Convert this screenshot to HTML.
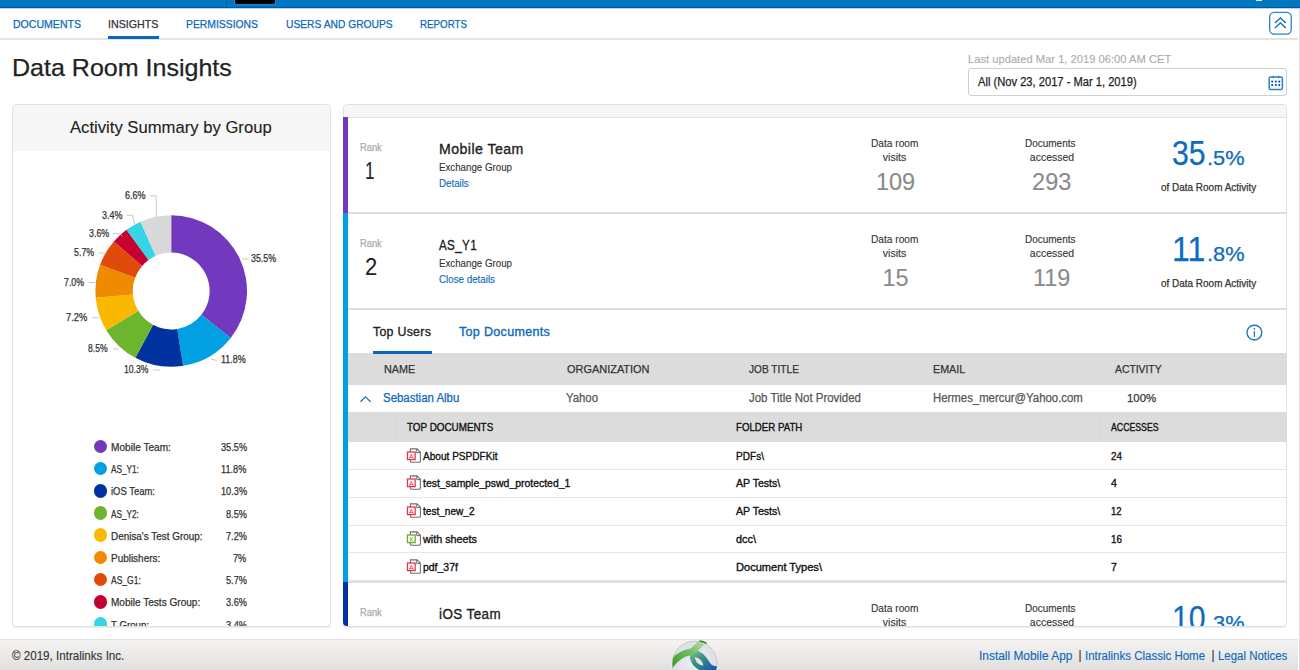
<!DOCTYPE html><html><head><meta charset="utf-8"><style>
*{margin:0;padding:0;box-sizing:border-box}
html,body{width:1300px;height:670px;overflow:hidden;background:#fff;font-family:"Liberation Sans",sans-serif}
.t{position:absolute;white-space:nowrap;line-height:1;transform-origin:0 0}
.b{position:absolute}
</style></head><body>
<div class="b" style="left:0;top:0;width:1300px;height:9px;background:linear-gradient(#0077c0 0,#0077c0 7px,#0057b0 7px,#0057b0 8px,#b8d4ee 8px)"></div>
<div class="b" style="left:226px;top:0;width:1px;height:8px;background:#035a94"></div>
<div class="b" style="left:235px;top:-4px;width:40px;height:8px;background:#000;border-radius:2px;box-shadow:0 0 0 1px #1a86d0"></div>
<div class="b" style="left:1256px;top:0;width:6px;height:1px;background:#e8eef4"></div>
<div class="b" style="left:0;top:38px;width:1298px;height:2px;background:#e4e4e4"></div>
<div class="t" style="left:13.00px;top:18.97px;font-size:11.5px;color:#0b68bb;font-weight:400;-webkit-text-stroke:0.25px #0b68bb;transform:scaleX(0.9175);">DOCUMENTS</div>
<div class="t" style="left:108.40px;top:18.97px;font-size:11.5px;color:#333;font-weight:400;-webkit-text-stroke:0.25px #333;transform:scaleX(0.9294);">INSIGHTS</div>
<div class="t" style="left:186.20px;top:18.97px;font-size:11.5px;color:#0b68bb;font-weight:400;-webkit-text-stroke:0.25px #0b68bb;transform:scaleX(0.9015);">PERMISSIONS</div>
<div class="t" style="left:285.60px;top:18.97px;font-size:11.5px;color:#0b68bb;font-weight:400;-webkit-text-stroke:0.25px #0b68bb;transform:scaleX(0.8922);">USERS AND GROUPS</div>
<div class="t" style="left:419.90px;top:18.97px;font-size:11.5px;color:#0b68bb;font-weight:400;-webkit-text-stroke:0.25px #0b68bb;transform:scaleX(0.8488);">REPORTS</div>
<div class="b" style="left:108px;top:36px;width:51px;height:3px;background:#0a66b8"></div>
<svg class="b" style="left:1268px;top:11px" width="25" height="25" viewBox="0 0 25 25"><rect x="1.65" y="1.35" width="21.6" height="21.7" rx="4.5" fill="none" stroke="#2a82cc" stroke-width="1.3"/><path d="M7 12 L12.4 6.8 L17.8 12 M7 17 L12.4 11.8 L17.8 17" fill="none" stroke="#0a64b4" stroke-width="1.3"/></svg>
<div class="b" style="left:1299px;top:9px;width:1px;height:661px;background:#dcdcdc"></div>
<div class="t" style="left:12.20px;top:56.38px;font-size:24px;color:#222;font-weight:400;-webkit-text-stroke:0.25px #222;transform:scaleX(1.0431);">Data Room Insights</div>
<div class="t" style="left:968.30px;top:53.57px;font-size:11.5px;color:#ababab;font-weight:400;-webkit-text-stroke:0.12px #ababab;transform:scaleX(0.9724);">Last updated Mar 1, 2019 06:00 AM CET</div>
<div class="b" style="left:968px;top:68px;width:319px;height:28px;border:1px solid #d0d0d0;border-radius:3px;background:#fff"></div>
<div class="t" style="left:978.30px;top:76.12px;font-size:12.5px;color:#222;font-weight:400;-webkit-text-stroke:0.25px #222;transform:scaleX(0.8922);">All (Nov 23, 2017 - Mar 1, 2019)</div>
<svg class="b" style="left:1267px;top:74px" width="18" height="18" viewBox="0 0 18 18"><rect x="2.2" y="2.9" width="13.2" height="12.6" rx="1.6" fill="none" stroke="#2a82cc" stroke-width="1.5"/><rect x="5.6" y="1.8" width="1.4" height="2.4" fill="#2a82cc"/><rect x="10.8" y="1.8" width="1.4" height="2.4" fill="#2a82cc"/><circle cx="5.2" cy="7.6" r="1.1" fill="#0a4fa8"/><circle cx="8.8" cy="7.6" r="1.1" fill="#0a4fa8"/><circle cx="12.3" cy="7.6" r="1.1" fill="#0a4fa8"/><circle cx="5.2" cy="11.1" r="1.1" fill="#0a4fa8"/><circle cx="8.8" cy="11.1" r="1.1" fill="#0a4fa8"/><circle cx="12.3" cy="11.1" r="1.1" fill="#0a4fa8"/></svg>
<div class="b" style="left:12px;top:104px;width:319px;height:523px;border:1px solid #e2e2e2;border-radius:4px;background:#fff;overflow:hidden;box-shadow:0 1px 0 #ececec"><div class="b" style="left:0;top:0;width:317px;height:46px;background:#f6f6f6"></div></div>
<div class="t" style="left:70.00px;top:118.71px;font-size:17px;color:#222;font-weight:400;-webkit-text-stroke:0.12px #222;transform:scaleX(0.9793);">Activity Summary by Group</div>
<svg class="b" style="left:0;top:0" width="340" height="400" viewBox="0 0 340 400"><path d="M171.20 215.20 A75.8 75.8 0 0 1 230.68 337.99 L201.33 314.81 A38.4 38.4 0 0 0 171.20 252.60Z" fill="#7239bf"/><path d="M230.68 337.99 A75.8 75.8 0 0 1 183.10 365.86 L177.23 328.92 A38.4 38.4 0 0 0 201.33 314.81Z" fill="#00a0e3"/><path d="M183.10 365.86 A75.8 75.8 0 0 1 135.39 357.81 L153.06 324.84 A38.4 38.4 0 0 0 177.23 328.92Z" fill="#0033a0"/><path d="M135.39 357.81 A75.8 75.8 0 0 1 106.28 330.14 L138.31 310.83 A38.4 38.4 0 0 0 153.06 324.84Z" fill="#6cb52d"/><path d="M106.28 330.14 A75.8 75.8 0 0 1 95.70 297.69 L132.95 294.39 A38.4 38.4 0 0 0 138.31 310.83Z" fill="#f8b900"/><path d="M95.70 297.69 A75.8 75.8 0 0 1 100.08 264.78 L135.17 277.71 A38.4 38.4 0 0 0 132.95 294.39Z" fill="#f08a00"/><path d="M100.08 264.78 A75.8 75.8 0 0 1 113.86 241.43 L142.15 265.89 A38.4 38.4 0 0 0 135.17 277.71Z" fill="#e04a0a"/><path d="M113.86 241.43 A75.8 75.8 0 0 1 126.49 229.79 L148.55 259.99 A38.4 38.4 0 0 0 142.15 265.89Z" fill="#c70032"/><path d="M126.49 229.79 A75.8 75.8 0 0 1 140.54 221.68 L155.67 255.88 A38.4 38.4 0 0 0 148.55 259.99Z" fill="#35d5e5"/><path d="M140.54 221.68 A75.8 75.8 0 0 1 171.20 215.20 L171.20 252.60 A38.4 38.4 0 0 0 155.67 255.88Z" fill="#d9d9d9"/><path d="M150 195.8 H156.2 V217.6" fill="none" stroke="#c8c8c8" stroke-width="1"/><path d="M126.6 215.3 H132.6 L134.5 224" fill="none" stroke="#c8c8c8" stroke-width="1"/><path d="M112.8 233.4 H119.6 L122 236" fill="none" stroke="#c8c8c8" stroke-width="1"/><path d="M98.7 253.1 H105" fill="none" stroke="#c8c8c8" stroke-width="1"/><path d="M88.5 282.5 H95" fill="none" stroke="#c8c8c8" stroke-width="1"/><path d="M92.1 317.7 H98.8" fill="none" stroke="#c8c8c8" stroke-width="1"/><path d="M113 349 H118.7" fill="none" stroke="#c8c8c8" stroke-width="1"/><path d="M153 370 H160" fill="none" stroke="#c8c8c8" stroke-width="1"/><path d="M210.6 359 L217 360.5" fill="none" stroke="#c8c8c8" stroke-width="1"/><path d="M241.9 259 H248.2" fill="none" stroke="#c8c8c8" stroke-width="1"/></svg>
<div class="t" style="left:124.90px;top:191.03px;font-size:10px;color:#333;font-weight:400;-webkit-text-stroke:0.25px #333;transform:scaleX(0.9035);">6.6%</div>
<div class="t" style="left:101.90px;top:210.53px;font-size:10px;color:#333;font-weight:400;-webkit-text-stroke:0.25px #333;transform:scaleX(0.8904);">3.4%</div>
<div class="t" style="left:88.50px;top:228.63px;font-size:10px;color:#333;font-weight:400;-webkit-text-stroke:0.25px #333;transform:scaleX(0.8860);">3.6%</div>
<div class="t" style="left:74.20px;top:248.34px;font-size:10px;color:#333;font-weight:400;-webkit-text-stroke:0.25px #333;transform:scaleX(0.8860);">5.7%</div>
<div class="t" style="left:64.00px;top:277.74px;font-size:10px;color:#333;font-weight:400;-webkit-text-stroke:0.25px #333;transform:scaleX(0.8772);">7.0%</div>
<div class="t" style="left:66.00px;top:312.94px;font-size:10px;color:#333;font-weight:400;-webkit-text-stroke:0.25px #333;transform:scaleX(0.9342);">7.2%</div>
<div class="t" style="left:88.00px;top:344.24px;font-size:10px;color:#333;font-weight:400;-webkit-text-stroke:0.25px #333;transform:scaleX(0.8596);">8.5%</div>
<div class="t" style="left:123.90px;top:365.24px;font-size:10px;color:#333;font-weight:400;-webkit-text-stroke:0.25px #333;transform:scaleX(0.8607);">10.3%</div>
<div class="t" style="left:221.00px;top:355.34px;font-size:10px;color:#333;font-weight:400;-webkit-text-stroke:0.25px #333;transform:scaleX(0.8949);">11.8%</div>
<div class="t" style="left:251.30px;top:254.43px;font-size:10px;color:#333;font-weight:400;-webkit-text-stroke:0.25px #333;transform:scaleX(0.8854);">35.5%</div>
<div class="b" style="left:13px;top:105px;width:317px;height:521px;overflow:hidden"><div class="b" style="left:80.60px;top:334.50px;width:13.8px;height:13.8px;border-radius:50%;background:#7239bf"></div><div class="t" style="left:98.20px;top:337.01px;font-size:10.5px;color:#333;font-weight:400;-webkit-text-stroke:0.25px #333;transform:scaleX(0.9620);">Mobile Team:</div><div class="t" style="left:207.65px;top:337.01px;font-size:10.5px;color:#333;font-weight:400;-webkit-text-stroke:0.25px #333;transform:scaleX(0.8750);">35.5%</div><div class="b" style="left:80.60px;top:356.70px;width:13.8px;height:13.8px;border-radius:50%;background:#00a0e3"></div><div class="t" style="left:98.20px;top:359.21px;font-size:10.5px;color:#333;font-weight:400;-webkit-text-stroke:0.25px #333;transform:scaleX(0.7838);">AS_Y1:</div><div class="t" style="left:208.34px;top:359.21px;font-size:10.5px;color:#333;font-weight:400;-webkit-text-stroke:0.25px #333;transform:scaleX(0.8750);">11.8%</div><div class="b" style="left:80.60px;top:378.90px;width:13.8px;height:13.8px;border-radius:50%;background:#0033a0"></div><div class="t" style="left:98.20px;top:381.41px;font-size:10.5px;color:#333;font-weight:400;-webkit-text-stroke:0.25px #333;transform:scaleX(0.9012);">iOS Team:</div><div class="t" style="left:207.65px;top:381.41px;font-size:10.5px;color:#333;font-weight:400;-webkit-text-stroke:0.25px #333;transform:scaleX(0.8750);">10.3%</div><div class="b" style="left:80.60px;top:401.10px;width:13.8px;height:13.8px;border-radius:50%;background:#6cb52d"></div><div class="t" style="left:98.20px;top:403.61px;font-size:10.5px;color:#333;font-weight:400;-webkit-text-stroke:0.25px #333;transform:scaleX(0.7838);">AS_Y2:</div><div class="t" style="left:212.75px;top:403.61px;font-size:10.5px;color:#333;font-weight:400;-webkit-text-stroke:0.25px #333;transform:scaleX(0.8750);">8.5%</div><div class="b" style="left:80.60px;top:423.30px;width:13.8px;height:13.8px;border-radius:50%;background:#f8b900"></div><div class="t" style="left:98.20px;top:425.81px;font-size:10.5px;color:#333;font-weight:400;-webkit-text-stroke:0.25px #333;transform:scaleX(0.9446);">Denisa's Test Group:</div><div class="t" style="left:212.75px;top:425.81px;font-size:10.5px;color:#333;font-weight:400;-webkit-text-stroke:0.25px #333;transform:scaleX(0.8750);">7.2%</div><div class="b" style="left:80.60px;top:445.50px;width:13.8px;height:13.8px;border-radius:50%;background:#f08a00"></div><div class="t" style="left:98.20px;top:448.01px;font-size:10.5px;color:#333;font-weight:400;-webkit-text-stroke:0.25px #333;transform:scaleX(0.9476);">Publishers:</div><div class="t" style="left:220.42px;top:448.01px;font-size:10.5px;color:#333;font-weight:400;-webkit-text-stroke:0.25px #333;transform:scaleX(0.8750);">7%</div><div class="b" style="left:80.60px;top:467.70px;width:13.8px;height:13.8px;border-radius:50%;background:#e04a0a"></div><div class="t" style="left:98.20px;top:470.21px;font-size:10.5px;color:#333;font-weight:400;-webkit-text-stroke:0.25px #333;transform:scaleX(0.8109);">AS_G1:</div><div class="t" style="left:212.75px;top:470.21px;font-size:10.5px;color:#333;font-weight:400;-webkit-text-stroke:0.25px #333;transform:scaleX(0.8750);">5.7%</div><div class="b" style="left:80.60px;top:489.90px;width:13.8px;height:13.8px;border-radius:50%;background:#c70032"></div><div class="t" style="left:98.20px;top:492.41px;font-size:10.5px;color:#333;font-weight:400;-webkit-text-stroke:0.25px #333;transform:scaleX(0.9572);">Mobile Tests Group:</div><div class="t" style="left:212.75px;top:492.41px;font-size:10.5px;color:#333;font-weight:400;-webkit-text-stroke:0.25px #333;transform:scaleX(0.8750);">3.6%</div><div class="b" style="left:80.60px;top:512.10px;width:13.8px;height:13.8px;border-radius:50%;background:#35d5e5"></div><div class="t" style="left:98.20px;top:514.61px;font-size:10.5px;color:#333;font-weight:400;-webkit-text-stroke:0.25px #333;transform:scaleX(0.9209);">T Group:</div><div class="t" style="left:212.75px;top:514.61px;font-size:10.5px;color:#333;font-weight:400;-webkit-text-stroke:0.25px #333;transform:scaleX(0.8750);">3.4%</div></div>
<div class="b" style="left:343px;top:104px;width:944px;height:523px;border:1px solid #e0e0e0;border-radius:4px;background:#fff;overflow:hidden;box-shadow:0 1px 0 #ececec"><div class="b" style="left:0;top:0;width:942px;height:13px;background:#f6f6f6;border-bottom:1px solid #e2e2e2"></div></div>
<div class="b" style="left:343px;top:117px;width:944px;height:509px;overflow:hidden"><div class="t" style="left:17.20px;top:25.54px;font-size:10px;color:#aaa;font-weight:400;-webkit-text-stroke:0.25px #aaa;transform:scaleX(0.9316);">Rank</div><div class="t" style="left:22.20px;top:42.28px;font-size:24px;color:#222;font-weight:400;-webkit-text-stroke:0.12px #222;transform:scaleX(0.7132);">1</div><div class="t" style="left:95.50px;top:24.65px;font-size:14px;letter-spacing:0.450px;color:#222;font-weight:400;-webkit-text-stroke:0.34px #222;transform:scaleX(1.0084);">Mobile Team</div><div class="t" style="left:95.50px;top:45.11px;font-size:10.5px;color:#333;font-weight:400;-webkit-text-stroke:0.12px #333;transform:scaleX(0.9264);">Exchange Group</div><div class="t" style="left:95.80px;top:61.11px;font-size:10.5px;color:#0b68bb;font-weight:400;-webkit-text-stroke:0.12px #0b68bb;transform:scaleX(0.9259);">Details</div><div class="t" style="left:527.60px;top:20.91px;font-size:10.5px;color:#333;font-weight:400;-webkit-text-stroke:0.12px #333;transform:scaleX(0.9667);">Data room</div><div class="t" style="left:539.85px;top:34.71px;font-size:10.5px;color:#333;font-weight:400;-webkit-text-stroke:0.12px #333;">visits</div><div class="t" style="left:682.35px;top:20.91px;font-size:10.5px;color:#333;font-weight:400;-webkit-text-stroke:0.12px #333;transform:scaleX(0.9505);">Documents</div><div class="t" style="left:686.82px;top:34.71px;font-size:10.5px;color:#333;font-weight:400;-webkit-text-stroke:0.12px #333;">accessed</div><div class="t" style="left:532.98px;top:53.71px;font-size:23.5px;color:#8a8a8a;font-weight:400;-webkit-text-stroke:0.12px #8a8a8a;">109</div><div class="t" style="left:689.08px;top:53.71px;font-size:23.5px;color:#8a8a8a;font-weight:400;-webkit-text-stroke:0.12px #8a8a8a;">293</div><div class="t" style="left:829.00px;top:18.94px;font-size:34.8px;color:#0b6cc0;font-weight:400;-webkit-text-stroke:0.25px #0b6cc0;transform:scaleX(0.8672);">35</div><div class="t" style="left:863.50px;top:32.09px;font-size:19.5px;color:#0b6cc0;font-weight:400;-webkit-text-stroke:0.25px #0b6cc0;transform:scaleX(1.1148);">.5%</div><div class="t" style="left:817.80px;top:64.71px;font-size:10.5px;color:#333;font-weight:400;-webkit-text-stroke:0.25px #333;transform:scaleX(0.9484);">of Data Room Activity</div><div class="t" style="left:17.20px;top:121.53px;font-size:10px;color:#aaa;font-weight:400;-webkit-text-stroke:0.25px #aaa;transform:scaleX(0.9316);">Rank</div><div class="t" style="left:21.70px;top:138.28px;font-size:24px;color:#222;font-weight:400;-webkit-text-stroke:0.12px #222;transform:scaleX(0.9159);">2</div><div class="t" style="left:95.50px;top:120.65px;font-size:14px;letter-spacing:0.450px;color:#222;font-weight:400;-webkit-text-stroke:0.34px #222;transform:scaleX(0.8280);">AS_Y1</div><div class="t" style="left:95.50px;top:141.11px;font-size:10.5px;color:#333;font-weight:400;-webkit-text-stroke:0.12px #333;transform:scaleX(0.9264);">Exchange Group</div><div class="t" style="left:95.80px;top:157.11px;font-size:10.5px;color:#0b68bb;font-weight:400;-webkit-text-stroke:0.12px #0b68bb;transform:scaleX(0.9316);">Close details</div><div class="t" style="left:527.60px;top:116.91px;font-size:10.5px;color:#333;font-weight:400;-webkit-text-stroke:0.12px #333;transform:scaleX(0.9667);">Data room</div><div class="t" style="left:539.85px;top:130.71px;font-size:10.5px;color:#333;font-weight:400;-webkit-text-stroke:0.12px #333;">visits</div><div class="t" style="left:682.35px;top:116.91px;font-size:10.5px;color:#333;font-weight:400;-webkit-text-stroke:0.12px #333;transform:scaleX(0.9505);">Documents</div><div class="t" style="left:686.82px;top:130.71px;font-size:10.5px;color:#333;font-weight:400;-webkit-text-stroke:0.12px #333;">accessed</div><div class="t" style="left:539.56px;top:149.71px;font-size:23.5px;color:#8a8a8a;font-weight:400;-webkit-text-stroke:0.12px #8a8a8a;">15</div><div class="t" style="left:689.96px;top:149.71px;font-size:23.5px;color:#8a8a8a;font-weight:400;-webkit-text-stroke:0.12px #8a8a8a;">119</div><div class="t" style="left:829.00px;top:114.94px;font-size:34.8px;color:#0b6cc0;font-weight:400;-webkit-text-stroke:0.25px #0b6cc0;transform:scaleX(0.9201);">11</div><div class="t" style="left:863.50px;top:128.09px;font-size:19.5px;color:#0b6cc0;font-weight:400;-webkit-text-stroke:0.25px #0b6cc0;transform:scaleX(1.1148);">.8%</div><div class="t" style="left:817.80px;top:160.71px;font-size:10.5px;color:#333;font-weight:400;-webkit-text-stroke:0.25px #333;transform:scaleX(0.9484);">of Data Room Activity</div><div class="t" style="left:17.20px;top:490.54px;font-size:10px;color:#aaa;font-weight:400;-webkit-text-stroke:0.25px #aaa;transform:scaleX(0.9316);">Rank</div><div class="t" style="left:21.70px;top:507.28px;font-size:24px;color:#222;font-weight:400;-webkit-text-stroke:0.12px #222;transform:scaleX(0.9159);">3</div><div class="t" style="left:95.50px;top:489.65px;font-size:14px;letter-spacing:0.450px;color:#222;font-weight:400;-webkit-text-stroke:0.34px #222;transform:scaleX(0.9576);">iOS Team</div><div class="t" style="left:95.50px;top:510.11px;font-size:10.5px;color:#333;font-weight:400;-webkit-text-stroke:0.12px #333;transform:scaleX(0.9264);">Exchange Group</div><div class="t" style="left:95.80px;top:526.11px;font-size:10.5px;color:#0b68bb;font-weight:400;-webkit-text-stroke:0.12px #0b68bb;transform:scaleX(0.9259);">Details</div><div class="t" style="left:527.60px;top:485.91px;font-size:10.5px;color:#333;font-weight:400;-webkit-text-stroke:0.12px #333;transform:scaleX(0.9667);">Data room</div><div class="t" style="left:539.85px;top:499.71px;font-size:10.5px;color:#333;font-weight:400;-webkit-text-stroke:0.12px #333;">visits</div><div class="t" style="left:682.35px;top:485.91px;font-size:10.5px;color:#333;font-weight:400;-webkit-text-stroke:0.12px #333;transform:scaleX(0.9505);">Documents</div><div class="t" style="left:686.82px;top:499.71px;font-size:10.5px;color:#333;font-weight:400;-webkit-text-stroke:0.12px #333;">accessed</div><div class="t" style="left:829.00px;top:483.94px;font-size:34.8px;color:#0b6cc0;font-weight:400;-webkit-text-stroke:0.25px #0b6cc0;transform:scaleX(0.8672);">10</div><div class="t" style="left:863.50px;top:497.09px;font-size:19.5px;color:#0b6cc0;font-weight:400;-webkit-text-stroke:0.25px #0b6cc0;transform:scaleX(1.1148);">.3%</div><div class="t" style="left:817.80px;top:529.71px;font-size:10.5px;color:#333;font-weight:400;-webkit-text-stroke:0.25px #333;transform:scaleX(0.9484);">of Data Room Activity</div><div class="b" style="left:0.00px;top:0.00px;width:5.00px;height:96.00px;background:#7239bf"></div><div class="b" style="left:0.00px;top:96.00px;width:5.00px;height:369.00px;background:#00a0e3"></div><div class="b" style="left:0.00px;top:465.00px;width:5.00px;height:44.00px;background:#0033a0;border-bottom-left-radius:4px"></div><div class="b" style="left:5.00px;top:95.00px;width:939.00px;height:2.00px;background:#dedede"></div><div class="b" style="left:5.00px;top:191.00px;width:939.00px;height:2.00px;background:#dedede"></div><div class="b" style="left:5.00px;top:464.00px;width:939.00px;height:2.00px;background:#dedede"></div><div class="t" style="left:30.10px;top:208.52px;font-size:12.5px;letter-spacing:0.300px;color:#222;font-weight:400;-webkit-text-stroke:0.34px #222;transform:scaleX(0.9855);">Top Users</div><div class="t" style="left:115.90px;top:208.52px;font-size:12.5px;letter-spacing:0.300px;color:#0b68bb;font-weight:400;-webkit-text-stroke:0.34px #0b68bb;transform:scaleX(1.0036);">Top Documents</div><svg class="b" style="left:901px;top:205px" width="21" height="21" viewBox="0 0 21 21"><circle cx="10.4" cy="10.6" r="7.4" fill="none" stroke="#1a78c8" stroke-width="1.4"/><circle cx="10.4" cy="6.8" r="0.9" fill="#1a78c8"/><rect x="9.75" y="9" width="1.3" height="5.9" rx="0.6" fill="#1a78c8"/></svg><div class="b" style="left:5.00px;top:236.00px;width:939.00px;height:32.00px;background:#dcdcdc"></div><div class="b" style="left:30.00px;top:234.00px;width:59.00px;height:3.00px;background:#0a66b8"></div><div class="t" style="left:40.90px;top:246.57px;font-size:11.5px;color:#333;font-weight:400;-webkit-text-stroke:0.25px #333;transform:scaleX(0.9418);">NAME</div><div class="t" style="left:223.50px;top:246.57px;font-size:11.5px;color:#333;font-weight:400;-webkit-text-stroke:0.25px #333;transform:scaleX(0.9521);">ORGANIZATION</div><div class="t" style="left:406.10px;top:246.57px;font-size:11.5px;color:#333;font-weight:400;-webkit-text-stroke:0.25px #333;transform:scaleX(0.8810);">JOB TITLE</div><div class="t" style="left:589.80px;top:246.57px;font-size:11.5px;color:#333;font-weight:400;-webkit-text-stroke:0.25px #333;transform:scaleX(0.9333);">EMAIL</div><div class="t" style="left:772.40px;top:246.57px;font-size:11.5px;color:#333;font-weight:400;-webkit-text-stroke:0.25px #333;transform:scaleX(0.9005);">ACTIVITY</div><svg class="b" style="left:15px;top:276px" width="16" height="12" viewBox="0 0 16 12"><path d="M2.5 8.7 L7.5 3.9 L12.6 8.7" fill="none" stroke="#1a78c8" stroke-width="1.3"/></svg><div class="t" style="left:40.20px;top:275.24px;font-size:12px;color:#0b68bb;font-weight:400;-webkit-text-stroke:0.25px #0b68bb;transform:scaleX(0.9533);">Sebastian Albu</div><div class="t" style="left:223.00px;top:275.24px;font-size:12px;color:#555;font-weight:400;-webkit-text-stroke:0.25px #555;transform:scaleX(0.9456);">Yahoo</div><div class="t" style="left:406.00px;top:275.24px;font-size:12px;color:#555;font-weight:400;-webkit-text-stroke:0.25px #555;transform:scaleX(0.9538);">Job Title Not Provided</div><div class="t" style="left:589.80px;top:275.24px;font-size:12px;color:#555;font-weight:400;-webkit-text-stroke:0.25px #555;transform:scaleX(0.9479);">Hermes_mercur@Yahoo.com</div><div class="t" style="left:784.00px;top:275.67px;font-size:11.5px;color:#333;font-weight:400;-webkit-text-stroke:0.25px #333;transform:scaleX(0.9918);">100%</div><div class="b" style="left:5.00px;top:295.00px;width:939.00px;height:30.00px;background:#dcdcdc"></div><div class="b" style="left:53.00px;top:295.00px;width:1.00px;height:30.00px;background:#d8d8d8"></div><div class="b" style="left:757.00px;top:295.00px;width:1.00px;height:30.00px;background:#d8d8d8"></div><div class="b" style="left:381.00px;top:295.00px;width:1.00px;height:30.00px;background:#d9d9d9"></div><div class="t" style="left:64.00px;top:305.31px;font-size:10.5px;color:#111;font-weight:400;-webkit-text-stroke:0.34px #111;transform:scaleX(0.9393);">TOP DOCUMENTS</div><div class="t" style="left:392.50px;top:305.31px;font-size:10.5px;color:#111;font-weight:400;-webkit-text-stroke:0.34px #111;transform:scaleX(0.9211);">FOLDER PATH</div><div class="t" style="left:768.20px;top:305.31px;font-size:10.5px;color:#111;font-weight:400;-webkit-text-stroke:0.34px #111;transform:scaleX(0.8326);">ACCESSES</div><div class="b" style="left:5.00px;top:352.00px;width:939.00px;height:1.00px;background:#e6e6e6"></div><div class="t" style="left:80.30px;top:333.71px;font-size:10.5px;color:#111;font-weight:400;-webkit-text-stroke:0.34px #111;transform:scaleX(0.9601);">About PSPDFKit</div><div class="t" style="left:392.90px;top:333.71px;font-size:10.5px;color:#111;font-weight:400;-webkit-text-stroke:0.34px #111;transform:scaleX(0.9592);">PDFs\</div><div class="t" style="left:768.00px;top:333.71px;font-size:10.5px;color:#111;font-weight:400;-webkit-text-stroke:0.34px #111;transform:scaleX(0.9438);">24</div><svg class="b" style="left:63px;top:330.50px" width="16" height="17" viewBox="0 0 16 17"><path d="M4.4 0.9 H11 L14.4 4.3 V13.2 Q14.4 14.2 13.4 14.2 H5.4 Q4.4 14.2 4.4 13.2 Z" fill="#fff" stroke="#6e6e6e" stroke-width="1.1"/><path d="M10.7 1 V4.6 H14.3" fill="none" stroke="#6e6e6e" stroke-width="1"/><rect x="1.45" y="4.0" width="7.7" height="7.6" fill="#fff" stroke="#e8364f" stroke-width="1.3"/><path d="M5.3 6.3 Q4.6 8.6 3.3 10.6 M5.3 6.3 Q6 8.6 7.4 10.6 M3.6 9.8 Q5.3 8.9 7.1 9.8" fill="none" stroke="#e8364f" stroke-width="0.8"/></svg><div class="b" style="left:5.00px;top:379.75px;width:939.00px;height:1.00px;background:#e6e6e6"></div><div class="t" style="left:80.30px;top:361.46px;font-size:10.5px;color:#111;font-weight:400;-webkit-text-stroke:0.34px #111;transform:scaleX(0.9935);">test_sample_pswd_protected_1</div><div class="t" style="left:392.90px;top:361.46px;font-size:10.5px;color:#111;font-weight:400;-webkit-text-stroke:0.34px #111;transform:scaleX(1.0069);">AP Tests\</div><div class="t" style="left:768.00px;top:361.46px;font-size:10.5px;color:#111;font-weight:400;-webkit-text-stroke:0.34px #111;">4</div><svg class="b" style="left:63px;top:358.25px" width="16" height="17" viewBox="0 0 16 17"><path d="M4.4 0.9 H11 L14.4 4.3 V13.2 Q14.4 14.2 13.4 14.2 H5.4 Q4.4 14.2 4.4 13.2 Z" fill="#fff" stroke="#6e6e6e" stroke-width="1.1"/><path d="M10.7 1 V4.6 H14.3" fill="none" stroke="#6e6e6e" stroke-width="1"/><rect x="1.45" y="4.0" width="7.7" height="7.6" fill="#fff" stroke="#e8364f" stroke-width="1.3"/><path d="M5.3 6.3 Q4.6 8.6 3.3 10.6 M5.3 6.3 Q6 8.6 7.4 10.6 M3.6 9.8 Q5.3 8.9 7.1 9.8" fill="none" stroke="#e8364f" stroke-width="0.8"/></svg><div class="b" style="left:5.00px;top:407.50px;width:939.00px;height:1.00px;background:#e6e6e6"></div><div class="t" style="left:80.30px;top:389.21px;font-size:10.5px;color:#111;font-weight:400;-webkit-text-stroke:0.34px #111;transform:scaleX(0.9589);">test_new_2</div><div class="t" style="left:392.90px;top:389.21px;font-size:10.5px;color:#111;font-weight:400;-webkit-text-stroke:0.34px #111;transform:scaleX(1.0069);">AP Tests\</div><div class="t" style="left:768.00px;top:389.21px;font-size:10.5px;color:#111;font-weight:400;-webkit-text-stroke:0.34px #111;transform:scaleX(0.9009);">12</div><svg class="b" style="left:63px;top:386.00px" width="16" height="17" viewBox="0 0 16 17"><path d="M4.4 0.9 H11 L14.4 4.3 V13.2 Q14.4 14.2 13.4 14.2 H5.4 Q4.4 14.2 4.4 13.2 Z" fill="#fff" stroke="#6e6e6e" stroke-width="1.1"/><path d="M10.7 1 V4.6 H14.3" fill="none" stroke="#6e6e6e" stroke-width="1"/><rect x="1.45" y="4.0" width="7.7" height="7.6" fill="#fff" stroke="#e8364f" stroke-width="1.3"/><path d="M5.3 6.3 Q4.6 8.6 3.3 10.6 M5.3 6.3 Q6 8.6 7.4 10.6 M3.6 9.8 Q5.3 8.9 7.1 9.8" fill="none" stroke="#e8364f" stroke-width="0.8"/></svg><div class="b" style="left:5.00px;top:435.25px;width:939.00px;height:1.00px;background:#e6e6e6"></div><div class="t" style="left:80.35px;top:416.96px;font-size:10.5px;color:#111;font-weight:400;-webkit-text-stroke:0.34px #111;transform:scaleX(1.0284);">with sheets</div><div class="t" style="left:392.90px;top:416.96px;font-size:10.5px;color:#111;font-weight:400;-webkit-text-stroke:0.34px #111;transform:scaleX(1.0328);">dcc\</div><div class="t" style="left:768.00px;top:416.96px;font-size:10.5px;color:#111;font-weight:400;-webkit-text-stroke:0.34px #111;transform:scaleX(0.9438);">16</div><svg class="b" style="left:63px;top:413.75px" width="16" height="17" viewBox="0 0 16 17"><path d="M4.4 0.9 H11 L14.4 4.3 V13.2 Q14.4 14.2 13.4 14.2 H5.4 Q4.4 14.2 4.4 13.2 Z" fill="#fff" stroke="#6e6e6e" stroke-width="1.1"/><path d="M10.7 1 V4.6 H14.3" fill="none" stroke="#6e6e6e" stroke-width="1"/><rect x="1.45" y="4.0" width="7.7" height="7.6" fill="#fff" stroke="#6cab2d" stroke-width="1.3"/><path d="M3.9 6.2 L6.7 10.6 M6.7 6.2 L3.9 10.6" fill="none" stroke="#6cab2d" stroke-width="0.9"/></svg><div class="b" style="left:5.00px;top:463.00px;width:939.00px;height:1.00px;background:#e6e6e6"></div><div class="t" style="left:80.30px;top:444.71px;font-size:10.5px;color:#111;font-weight:400;-webkit-text-stroke:0.34px #111;transform:scaleX(0.9952);">pdf_37f</div><div class="t" style="left:392.90px;top:444.71px;font-size:10.5px;color:#111;font-weight:400;-webkit-text-stroke:0.34px #111;transform:scaleX(1.0548);">Document Types\</div><div class="t" style="left:768.00px;top:444.71px;font-size:10.5px;color:#111;font-weight:400;-webkit-text-stroke:0.34px #111;">7</div><svg class="b" style="left:63px;top:441.50px" width="16" height="17" viewBox="0 0 16 17"><path d="M4.4 0.9 H11 L14.4 4.3 V13.2 Q14.4 14.2 13.4 14.2 H5.4 Q4.4 14.2 4.4 13.2 Z" fill="#fff" stroke="#6e6e6e" stroke-width="1.1"/><path d="M10.7 1 V4.6 H14.3" fill="none" stroke="#6e6e6e" stroke-width="1"/><rect x="1.45" y="4.0" width="7.7" height="7.6" fill="#fff" stroke="#e8364f" stroke-width="1.3"/><path d="M5.3 6.3 Q4.6 8.6 3.3 10.6 M5.3 6.3 Q6 8.6 7.4 10.6 M3.6 9.8 Q5.3 8.9 7.1 9.8" fill="none" stroke="#e8364f" stroke-width="0.8"/></svg></div>
<div class="b" style="left:0;top:639px;width:1298px;height:31px;background:linear-gradient(#f4f3f2,#e2e0de);border-top:1px solid #e0dfde"></div>
<div class="t" style="left:12.00px;top:650.04px;font-size:12px;color:#333;font-weight:400;-webkit-text-stroke:0.12px #333;transform:scaleX(0.9663);">© 2019, Intralinks Inc.</div>
<div class="t" style="left:978.90px;top:650.04px;font-size:12px;color:#0b68bb;font-weight:400;-webkit-text-stroke:0.12px #0b68bb;transform:scaleX(0.9928);">Install Mobile App</div>
<div class="t" style="left:1078.20px;top:647.97px;font-size:13.5px;color:#444;font-weight:400;-webkit-text-stroke:0.12px #444;">|</div>
<div class="t" style="left:1084.70px;top:650.04px;font-size:12px;color:#0b68bb;font-weight:400;-webkit-text-stroke:0.12px #0b68bb;transform:scaleX(0.9577);">Intralinks Classic Home</div>
<div class="t" style="left:1211.20px;top:647.97px;font-size:13.5px;color:#444;font-weight:400;-webkit-text-stroke:0.12px #444;">|</div>
<div class="t" style="left:1217.50px;top:650.04px;font-size:12px;color:#0b68bb;font-weight:400;-webkit-text-stroke:0.12px #0b68bb;transform:scaleX(0.9530);">Legal Notices</div>
<svg class="b" style="left:668px;top:637px" width="54" height="33" viewBox="0 0 54 33"><defs><linearGradient id="gb" x1="0" y1="0" x2="1" y2="1"><stop offset="0" stop-color="#8cc98a"/><stop offset="0.4" stop-color="#3f9084"/><stop offset="1" stop-color="#0d50b8"/></linearGradient><linearGradient id="gg" x1="0" y1="1" x2="1" y2="0"><stop offset="0" stop-color="#2f9a1c"/><stop offset="0.55" stop-color="#6fb95c"/><stop offset="1" stop-color="#b0dba4"/></linearGradient><radialGradient id="gc" cx="0.5" cy="0.45" r="0.55"><stop offset="0" stop-color="#eef0f3"/><stop offset="1" stop-color="#d9dce2"/></radialGradient><clipPath id="cc"><circle cx="26.7" cy="26.7" r="22.3"/></clipPath></defs><circle cx="26.7" cy="26.7" r="23.6" fill="#f7f6f5"/><circle cx="26.7" cy="26.7" r="22.6" fill="url(#gc)" stroke="#c3c6cc" stroke-width="1"/><g clip-path="url(#cc)"><path d="M21.5 14.5 C21.5 24 24 29 31.6 33 L49.5 33 L49.5 29.2 C46 29 44 28.5 42.6 26.8 C40 22 36 16 29.2 13.4 Z" fill="url(#gb)"/><path d="M26.8 20.1 C27.5 25 30 28 35.4 28.7 C34.5 24 31.5 21 26.8 20.1 Z" fill="#e2e5ea"/><path d="M1.5 29.5 C8 20 16 16 22 15 C26.5 14 29.5 9.5 34.5 4.5" fill="none" stroke="url(#gg)" stroke-width="6.6"/></g><path d="M31.5 4.1 Q35.5 4.6 38.6 6.4" fill="none" stroke="#2a8a1a" stroke-width="1.5"/></svg>
</body></html>
